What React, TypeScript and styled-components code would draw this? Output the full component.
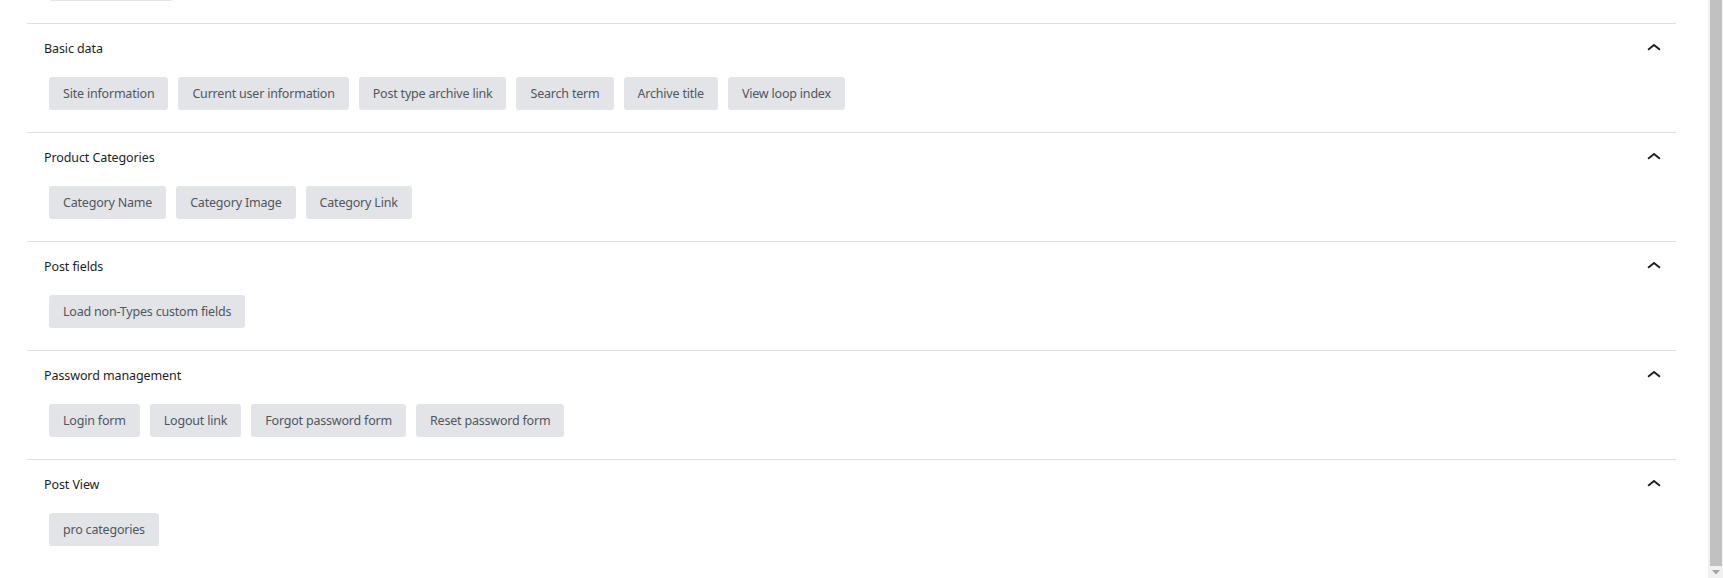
import React from "react";
import styled, { createGlobalStyle } from "styled-components";

const GlobalStyle = createGlobalStyle`
  html, body {
    margin: 0;
    padding: 0;
    background: #ffffff;
  }
  body {
    font-family: "Noto Sans", "Open Sans", Arial, sans-serif;
    -webkit-font-smoothing: antialiased;
  }
`;

const Page = styled.div`
  display: flex;
  height: 578px;
  overflow: hidden;
  background: #ffffff;
`;

const Main = styled.main`
  flex: 1;
  min-width: 0;
  padding: 0 32px 0 27px;
`;

const Section = styled.section`
  border-top: 1px solid #e0e0e0;
  padding: 12px 0 22px 0;
`;

/* Bottom of the group above, scrolled mostly out of view */
const SectionTail = styled.div`
  margin-top: -32px;
  padding-bottom: 22px;
`;

const Header = styled.div`
  display: flex;
  align-items: center;
  justify-content: space-between;
  height: 24px;
  padding: 0 10px 0 17px;
`;

const Title = styled.h3`
  margin: 0;
  padding-top: 1px;
  font-size: 12.5px;
  font-weight: 400;
  letter-spacing: -0.1px;
  color: #1e1e1e;
  line-height: 23px;
`;

const Toggle = styled.button`
  display: flex;
  align-items: center;
  justify-content: center;
  width: 24px;
  height: 24px;
  padding: 0;
  border: 0;
  background: transparent;
  color: #1e1e1e;
  cursor: pointer;
`;

const Buttons = styled.div<{ $flush?: boolean }>`
  display: flex;
  flex-wrap: wrap;
  gap: 10px;
  margin-top: ${(p) => (p.$flush ? "0" : "17px")};
  padding-left: 22px;
`;

const Tag = styled.button<{ $width?: number }>`
  display: inline-flex;
  align-items: center;
  height: 33px;
  width: ${(p) => (p.$width ? `${p.$width}px` : "auto")};
  padding: 0 14px;
  border: 0;
  border-radius: 3px;
  background: #e3e4e7;
  color: #50575e;
  font-family: "Noto Sans", "Open Sans", Arial, sans-serif;
  font-size: 12.5px;
  letter-spacing: -0.2px;
  white-space: nowrap;
  cursor: pointer;
`;

const Scrollbar = styled.div`
  display: flex;
  flex-direction: column;
  width: 15px;
  flex: none;
  background: #f1f1f1;
`;

const Thumb = styled.div`
  flex: 1;
  margin: 0 1px 0 2px;
  background: #c1c1c1;
`;

const ArrowButton = styled.div`
  display: flex;
  align-items: center;
  justify-content: center;
  height: 12px;
  padding-left: 1px;
`;

const ChevronUp = () => (
  <svg width="24" height="24" viewBox="0 0 24 24" aria-hidden="true">
    <path
      d="M6.8 13.2L12 8.9l5.2 4.3"
      fill="none"
      stroke="currentColor"
      strokeWidth="1.9"
      strokeLinecap="square"
      strokeLinejoin="miter"
    />
  </svg>
);

type Group = { title: string; items: string[] };

const groups: Group[] = [
  {
    title: "Basic data",
    items: [
      "Site information",
      "Current user information",
      "Post type archive link",
      "Search term",
      "Archive title",
      "View loop index",
    ],
  },
  {
    title: "Product Categories",
    items: ["Category Name", "Category Image", "Category Link"],
  },
  { title: "Post fields", items: ["Load non-Types custom fields"] },
  {
    title: "Password management",
    items: ["Login form", "Logout link", "Forgot password form", "Reset password form"],
  },
  { title: "Post View", items: ["pro categories"] },
];

const GroupBlock: React.FC<{ group: Group }> = ({ group }) => (
  <Section>
    <Header>
      <Title>{group.title}</Title>
      <Toggle aria-label="Collapse">
        <ChevronUp />
      </Toggle>
    </Header>
    <Buttons>
      {group.items.map((item) => (
        <Tag key={item}>{item}</Tag>
      ))}
    </Buttons>
  </Section>
);

export default function App() {
  return (
    <>
      <GlobalStyle />
      <Page>
        <Main>
          <SectionTail aria-hidden="true">
            <Buttons $flush>
              <Tag $width={124} tabIndex={-1} />
            </Buttons>
          </SectionTail>
          {groups.map((g) => (
            <GroupBlock key={g.title} group={g} />
          ))}
        </Main>
        <Scrollbar>
          <Thumb />
          <ArrowButton>
            <svg width="8" height="5" viewBox="0 0 8 5" aria-hidden="true">
              <path d="M0 0h8L4 4.5z" fill="#a3a3a3" />
            </svg>
          </ArrowButton>
        </Scrollbar>
      </Page>
    </>
  );
}
